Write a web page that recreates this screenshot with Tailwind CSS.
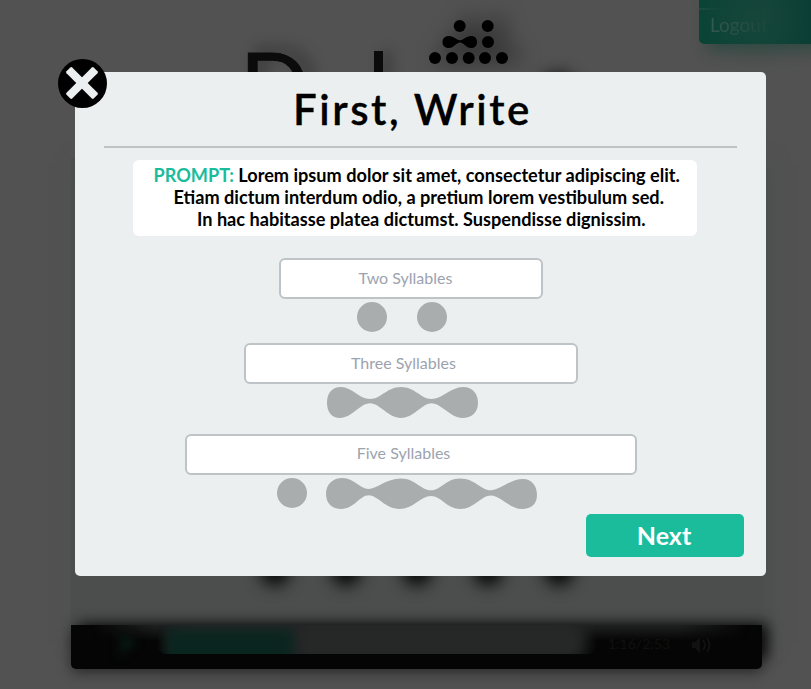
<!DOCTYPE html>
<html lang="en">
<head>
<meta charset="utf-8">
<title>First, Write</title>
<script src="https://cdn.jsdelivr.net/npm/@tailwindcss/browser@4"></script>
</head>
<body class="relative w-[811px] h-[689px] overflow-hidden bg-[#525252] font-['Lato','Open_Sans',sans-serif] text-black">

<!-- Dimmed page behind the dialog -->
<div class="absolute inset-0 overflow-hidden" aria-hidden="true">
  <div class="absolute left-[71px] top-[158px] w-[691px] h-[480px] bg-[#4c4e4e] shadow-[6px_6px_20px_#4a4f4e]"></div>
  <div class="absolute left-[699px] -top-2 w-[130px] h-[52px] rounded-[5px] bg-linear-to-r from-[#0a4436] via-[#0f4438] to-[#0a3d34] shadow-[8px_7px_14px_#27483fb0]">
    <div class="mt-4 h-0.5 w-6 bg-linear-to-r from-[#1d4d41] to-transparent"></div>
    <div class="absolute left-6 top-1 w-16 h-11 bg-[#22483e] opacity-50 blur-lg"></div>
    <p class="relative ml-[11px] mt-[4px] w-fit text-[19px] leading-[22px] bg-linear-to-r from-[#35584f] to-[#1a473c] bg-clip-text text-transparent">Logout</p>
  </div>
  <p class="absolute left-[240px] top-[46px] h-[26px] text-[91px] leading-[74px] text-[#0b0b0b] [-webkit-text-stroke:1px_#0b0b0b] [text-shadow:8px_-5px_16px_#00000060]">D</p>
  <div class="absolute left-[374px] top-[51px] w-[9px] h-8 bg-[#0b0b0b] shadow-[8px_0_14px_#00000050]"></div>
  <div class="absolute left-[546px] top-[78px] w-6 h-5 rounded-full bg-[#1c1c1c] shadow-[0_0_14px_7px_#252525]"></div>
  <svg class="absolute left-[420px] top-0 overflow-visible [filter:drop-shadow(10px_-2px_11px_#000000c0)]" width="100" height="72" fill="#000">
    <circle cx="39.7" cy="26" r="6"/><circle cx="67.7" cy="26" r="6"/>
    <path d="M22.5 42C22.5 38 25.5 36 29 36C34 36 36 40.2 40 40.2C44 40.2 46 36 51 36C54.5 36 57 38 57 42C57 46 54.5 48 51 48C46 48 44 42.4 40 42.4C36 42.4 34 48 29 48C25.5 48 22.5 46 22.5 42Z"/>
    <circle cx="68" cy="42" r="6"/>
    <circle cx="15" cy="58" r="6"/><circle cx="32" cy="58" r="6"/><circle cx="48.7" cy="58" r="6"/><circle cx="65" cy="58" r="6"/><circle cx="82" cy="58" r="6"/>
  </svg>
  <div class="absolute left-[260px] top-[556px] w-[314px] flex justify-between blur-[8px]">
    <i class="size-[30px] rounded-full bg-[#080808]"></i><i class="size-[30px] rounded-full bg-[#080808]"></i><i class="size-[30px] rounded-full bg-[#080808]"></i><i class="size-[30px] rounded-full bg-[#080808]"></i><i class="size-[30px] rounded-full bg-[#080808]"></i>
  </div>
  <div class="absolute left-[79px] top-[623px] w-[689px] h-[36px] rounded bg-[#101111] blur-[7px]"></div>
  <div class="absolute left-[71px] top-[625px] w-[691px] h-11 rounded-b-[5px] bg-[#050505] shadow-[0_4px_14px_#00000070] overflow-hidden">
    <div class="absolute left-0 top-0 w-full h-4 bg-linear-to-b from-[#202121] to-transparent [mask-image:linear-gradient(to_right,transparent_3%,black_12%,black_88%,transparent_98%)]"></div>
    <div class="absolute left-[87px] top-0 w-[438px] h-[29px] overflow-hidden rounded-b-lg">
      <div class="absolute inset-x-2 -top-2 h-12 rounded-full bg-[#262727] blur-[7px]"></div>
      <div class="absolute left-2 top-1 w-[128px] h-9 bg-[#0a251f] blur-[6px]"></div>
    </div>
    <svg class="absolute left-[46px] top-1 blur-[4px]" width="26" height="30"><path d="M3 2L21 13L2 28Z" fill="#071611"/></svg>
    <p class="absolute left-[537px] top-[10px] text-[14px] leading-[18px] text-[#101010]">1:16/2:53</p>
    <svg class="absolute left-[619px] top-2" width="24" height="24" fill="none" stroke="#111111" stroke-width="2"><path d="M2 9h3l5-5v16l-5-5H2z" fill="#111111" stroke="none"/><path d="M13 7q4 5 0 10M17 5q5 7 0 14"/></svg>
  </div>
</div>

<!-- Dialog -->
<main class="relative ml-[75px] mt-[72px] w-[691px] h-[504px] rounded-[5px] bg-[#ebeff0]">
  <button class="absolute -left-[17px] -top-[13px] size-[49px]" aria-label="Close">
    <svg width="49" height="49" viewBox="0 0 49 49"><circle cx="24.5" cy="24.5" r="24.5"/><g fill="#ebeff0" transform="translate(24 24)"><rect x="-19.2" y="-4" width="38.4" height="8" rx="1.3" transform="rotate(45)"/><rect x="-19.2" y="-4" width="38.4" height="8" rx="1.3" transform="rotate(-45)"/></g></svg>
  </button>
  <div class="flex flex-col items-start">
    <h1 class="ml-[218px] mt-[11px] h-[52px] text-[42px] leading-[52px] font-semibold tracking-[2.55px] [-webkit-text-stroke:0.3px_#000] whitespace-nowrap">First, Write</h1>
    <div class="ml-[29px] mt-[11px] w-[633px] h-0.5 bg-[#bdc3c7]"></div>
    <section class="ml-[58px] mt-3 w-[564px] h-[76px] rounded-md bg-white pt-1 text-[18.15px] leading-[22px] font-bold whitespace-nowrap">
      <p class="pl-[20.5px]"><span class="text-[#1abc9c]">PROMPT:</span> Lorem ipsum dolor sit amet, consectetur adipiscing elit.</p>
      <p class="pl-[40.5px]">Etiam dictum interdum odio, a pretium lorem vestibulum sed.</p>
      <p class="pl-[64px]">In hac habitasse platea dictumst. Suspendisse dignissim.</p>
    </section>

    <input class="ml-[204px] mt-[22px] w-[264px] h-[41px] rounded-md border-2 border-[#bdc3c7] bg-white pb-[2px] pr-[11px] text-center text-[16px] placeholder:text-[#9ca3af]" placeholder="Two Syllables">
    <div class="ml-[282px] mt-[3px] flex gap-[30px]"><i class="size-[30px] rounded-full bg-[#a9adae]"></i><i class="size-[30px] rounded-full bg-[#a9adae]"></i></div>

    <input class="ml-[169px] mt-[11px] w-[334px] h-[41px] rounded-md border-2 border-[#bdc3c7] bg-white pb-[2px] pr-[15px] text-center text-[16px] placeholder:text-[#9ca3af]" placeholder="Three Syllables">
    <svg class="ml-[252px] mt-[3px]" width="151" height="31" viewBox="0 0 151 31" fill="#a9adae"><path d="M0 16C0 6 5 0 14 0C25 0 32 12 43 12C54 12 60 0 74 0C88 0 94 12 104.5 12C115 12 124 0 136 0C146 0 151 7 151 16C151 25 145 31 135 31C124 31 114 16.3 104.5 16.3C95 16.3 87 31 74 31C61 31 53 16.3 43 16.3C33 16.3 25 31 13 31C5 31 0 25 0 16Z"/></svg>

    <input class="ml-[110px] mt-[16px] w-[452px] h-[41px] rounded-md border-2 border-[#bdc3c7] bg-white pb-[4px] pr-[15px] text-center text-[16px] placeholder:text-[#9ca3af]" placeholder="Five Syllables">
    <div class="ml-[202px] mt-[3px] flex items-start gap-[19px]">
      <i class="size-[30px] rounded-full bg-[#a9adae]"></i>
      <svg width="211" height="31" viewBox="0 0 211 31" fill="#a9adae"><path d="M0 16C0 6 7 0 16.5 0C28 0 34 11 42.5 11C51 11 60 .5 75 .5C89 .5 95 12.3 105 12.3C115 12.3 120 .5 134 .5C149 .5 155 12.3 164.5 12.3C174 12.3 184 1 197 1C206 1 211 8 211 17C211 26 205 31 196 31C184 31 174 17.5 165 17.5C155 17.5 148 31 134.5 31C121 31 115 18 105 18C95 18 87 31 73.5 31C59 31 52 17.3 42.5 17.3C34 17.3 28 31 15.5 31C6 31 0 25 0 16Z"/></svg>
    </div>
    <button class="ml-[511px] mt-[5px] w-[158px] h-[43px] rounded-[5px] bg-[#1abc9c] pr-[2px] pb-px text-[25px] leading-[42px] font-bold text-white">Next</button>
  </div>
</main>
</body>
</html>
